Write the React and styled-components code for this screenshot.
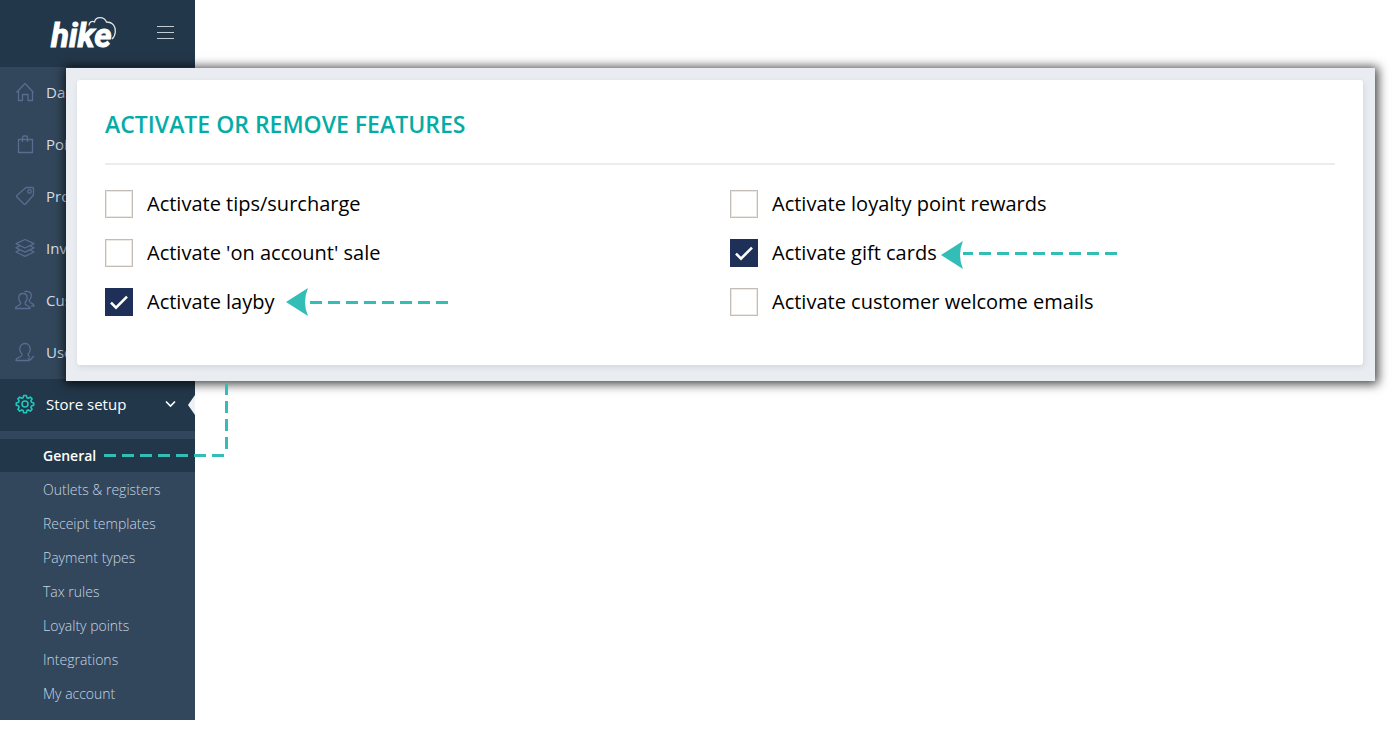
import React from "react";
import styled, { createGlobalStyle, css } from "styled-components";

const GlobalStyle = createGlobalStyle`
  *, *::before, *::after { box-sizing: border-box; }
  body {
    margin: 0;
    background: #fff;
    font-family: "Open Sans", "Noto Sans", sans-serif;
  }
`;

const Page = styled.div`
  position: relative;
  min-height: 100vh;
`;

const Sidebar = styled.aside`
  width: 195px;
  background: #32475b;
`;

const Brand = styled.header`
  display: flex;
  align-items: center;
  justify-content: space-between;
  height: 67px;
  padding: 0 21px 2px 49px;
  background: #23374a;
`;

const Logo = styled.svg`
  display: block;
  width: 70px;
  height: 49px;
  overflow: visible;
`;

const LogoText = styled.text`
  font-family: Roboto, "Liberation Sans", sans-serif;
  font-size: 33px;
  font-weight: 700;
  font-style: italic;
`;

const MenuButton = styled.button`
  display: flex;
  flex-direction: column;
  justify-content: space-between;
  width: 17px;
  height: 13px;
  margin: 0;
  padding: 0;
  border: 0;
  background: none;
  cursor: pointer;
`;

const MenuBar = styled.span`
  height: 1px;
  background: #c3cbd3;
`;

const List = styled.ul`
  margin: 0;
  padding: 0;
  list-style: none;
`;

const NavLink = styled.a`
  position: relative;
  display: flex;
  align-items: center;
  gap: 11px;
  height: 52px;
  padding: 0 19px 2px 15px;
  font-size: 15px;
  line-height: 20px;
  text-decoration: none;
  color: #d5dde6;
  ${(p) =>
    p.$active &&
    css`
      background: #23374a;
      color: #fff;
    `}
`;

const NavIcon = styled.svg`
  flex: none;
  width: 20px;
  height: 20px;
  fill: none;
  stroke: ${(p) => (p.$active ? "#1fc8bd" : "#5a6c90")};
  stroke-width: ${(p) => (p.$active ? 1.6 : 1.3)};
  stroke-linejoin: round;
`;

const NavLabel = styled.span`
  flex: 1;
  white-space: nowrap;
`;

const Chevron = styled.svg`
  width: 11px;
  height: 8px;
  fill: none;
  stroke: #fff;
  stroke-width: 1.6;
`;

const ActiveNotch = styled.span`
  position: absolute;
  right: 0;
  top: 16px;
  border: solid transparent;
  border-width: 10px 7px 10px 0;
  border-right-color: #eef1f5;
`;

const SubList = styled(List)`
  display: grid;
  gap: 1px;
  padding: 8px 0 10px;
`;

const SubItem = styled.li`
  position: relative;
  background: ${(p) => (p.$active ? "#23374a" : "transparent")};
`;

const SubLink = styled.a`
  display: block;
  padding-left: 43px;
  font-size: 14px;
  line-height: 33px;
  font-weight: ${(p) => (p.$active ? 600 : 300)};
  color: ${(p) => (p.$active ? "#fff" : "#c6d5e6")};
  text-decoration: none;
`;

const Connector = styled.svg`
  position: absolute;
  left: 104px;
  bottom: 0;
  z-index: 2;
  width: 126px;
  height: 89px;
  fill: none;
  stroke: #33bdb7;
  stroke-width: 3;
  stroke-dasharray: 12 6;
  pointer-events: none;
`;

const Panel = styled.main`
  position: absolute;
  z-index: 1;
  top: 68px;
  left: 66px;
  right: 25px;
  padding: 12px 12px 16px 11px;
  background: #e9ecf1;
  box-shadow: 1px 1px 10px 2px rgba(0, 0, 0, 0.75);
`;

const Card = styled.section`
  padding: 28px 28px 49px;
  background: #fff;
  border-radius: 3px;
  box-shadow: 1px 2px 5px rgba(120, 135, 155, 0.2);
`;

const Title = styled.h1`
  margin: 0 0 25px;
  padding-bottom: 23px;
  border-bottom: 2px solid #ececec;
  font-size: 23px;
  line-height: 32px;
  font-weight: 600;
  text-transform: uppercase;
  color: #05aca6;
`;

const Features = styled.div`
  display: grid;
  grid-template-columns: 1fr 1fr;
  gap: 21px 20px;
`;

const Feature = styled.div`
  display: flex;
  align-items: center;
  height: 28px;
`;

const Checkbox = styled.input`
  appearance: none;
  flex: none;
  width: 28px;
  height: 28px;
  margin: 0;
  border: 1px solid #c3bdb5;
  background: #fff;
  box-shadow: inset 0 0 0 1px #ece9e5;
  cursor: pointer;
  &:checked {
    border-color: #1f3058;
    box-shadow: none;
    background: #1f3058
      url("data:image/svg+xml,%3Csvg xmlns='http://www.w3.org/2000/svg' viewBox='0 0 24 24' fill='none' stroke='white' stroke-width='2.6'%3E%3Cpath d='M4 12.6l5 5L20 6.6'/%3E%3C/svg%3E")
      center / 24px 24px no-repeat;
  }
`;

const FeatureLabel = styled.label`
  padding-left: 14px;
  font-size: 20px;
  line-height: 28px;
  white-space: nowrap;
  color: #000;
`;

const Pointer = styled.svg`
  flex: none;
  width: 180px;
  height: 28px;
  margin-left: ${(p) => p.$gap}px;
  overflow: visible;
`;

const icons = {
  home: (
    <path d="M1.500 10.500 10 1.500l8.500 9M3.500 9v9.500h4v-6h5.500v6h4.500V9" />
  ),
  bag: (
    <>
      <path d="M3.500 5.500h14v13h-14z" />
      <path d="M7.500 8V3.500q0-1.500 1.500-1.500h2q1.500 0 1.500 1.500V8" />
    </>
  ),
  tag: (
    <>
      <path d="M11 1.500h6.500q1 0 1 1V9L10.500 18q-.8.800-1.600 0l-7-7q-.8-.8 0-1.500z" />
      <circle cx="14.500" cy="5.500" r="1.800" />
    </>
  ),
  layers: (
    <path d="M10 1.500l9 4.200-9 4.300-9-4.300zM4.500 8 1 9.800l9 4.300 9-4.300L15.500 8M4.500 12.200 1 14l9 4.300 9-4.300-3.500-1.800" />
  ),
  customers: (
    <>
      <path d="M8 3.500c-3 0-4.300 2-4.300 4.500 0 2 .8 3.500 2 4.500 0 2-.4 2.300-2.200 3-2 .8-3 1.300-3 3h14.500c0-1.700-1-2.200-3-3-1.800-.7-2-1-2-3 1.200-1 2.200-2.500 2.200-4.500C12.200 5.500 11 3.500 8 3.500z" />
      <path d="M9.500 2c1-.7 2-.9 3-.7 2.500.3 3.800 2 3.800 4.500 0 2-.8 3.400-2 4.400 0 1.800.3 2.200 2 2.900 1.700.6 2.700 1.200 2.700 3h-3" />
    </>
  ),
  users: (
    <>
      <path d="M14 18.500H1c0-1.800 1-2.500 3-3.200 2.400-.8 3-1.100 3-3.300-1.200-1-2.200-2.500-2.200-4.800C4.800 4 6.800 1.500 10 1.500S15.200 4 15.200 7.200c0 2.300-1 3.800-2.200 4.800 0 1.800.4 2.300 2 2.900" />
      <path d="M13 16l2 2.300 3.800-4.300" />
    </>
  ),
  gear: (
    <>
      <path d="M8.700 1.500h2.600l.6 2.200 1.400.6 2-1.200 1.800 1.800-1.200 2 .6 1.400 2.200.6v2.400l-2.200.6-.6 1.400 1.200 2-1.800 1.800-2-1.200-1.400.6-.6 2.200H8.700l-.6-2.200-1.400-.6-2 1.200-1.800-1.800 1.200-2-.6-1.400-2.200-.6V8.900l2.200-.6.600-1.400-1.200-2 1.800-1.800 2 1.200 1.400-.6z" />
      <circle cx="10" cy="10" r="3" />
    </>
  ),
};

const navItems = [
  { icon: "home", label: "Dashboard" },
  { icon: "bag", label: "Point of sale" },
  { icon: "tag", label: "Products" },
  { icon: "layers", label: "Inventory" },
  { icon: "customers", label: "Customers" },
  { icon: "users", label: "Users" },
  { icon: "gear", label: "Store setup", active: true },
];

const subItems = [
  "General",
  "Outlets & registers",
  "Receipt templates",
  "Payment types",
  "Tax rules",
  "Loyalty points",
  "Integrations",
  "My account",
];

const features = [
  { id: "tips", label: "Activate tips/surcharge" },
  { id: "loyalty", label: "Activate loyalty point rewards" },
  { id: "account", label: "Activate 'on account' sale" },
  {
    id: "gift",
    label: "Activate gift cards",
    on: true,
    pointer: { gap: 4, end: 176, drop: 2 },
  },
  {
    id: "layby",
    label: "Activate layby",
    on: true,
    pointer: { gap: 11, end: 162, drop: 0 },
  },
  { id: "emails", label: "Activate customer welcome emails" },
];

function HikeLogo() {
  return (
    <Logo viewBox="0 -4 70 49" role="img" aria-label="hike">
      <LogoText x="2" y="35" fill="#fff" stroke="#fff" strokeWidth="1">
        hike
      </LogoText>
      <path
        d="M40 13.500C40 10 43 8.500 45.500 10 46.500 4.500 55 4 57.500 10c6.500 0 9.500 5 8.800 10-.3 3-1.300 5.500-3.300 7"
        fill="none"
        stroke="#dfe5ea"
        strokeWidth="1.3"
      />
    </Logo>
  );
}

function DashedPointer({ gap, end, drop }) {
  return (
    <Pointer $gap={gap} viewBox="0 0 180 28" aria-hidden="true">
      <path d={`M0 ${14 + drop} 22 ${drop}q-6 14 0 28z`} fill="#33bdb7" />
      <path
        d={`M${end} 14.500H22`}
        stroke="#33bdb7"
        strokeWidth="3"
        strokeDasharray="12 6"
      />
    </Pointer>
  );
}

export default function App() {
  return (
    <Page>
      <GlobalStyle />
      <Sidebar>
        <Brand>
          <HikeLogo />
          <MenuButton type="button" aria-label="Toggle menu">
            <MenuBar />
            <MenuBar />
            <MenuBar />
          </MenuButton>
        </Brand>
        <nav aria-label="Main">
          <List>
            {navItems.map(({ icon, label, active }) => (
              <li key={label}>
                <NavLink href="#" $active={active}>
                  <NavIcon viewBox="0 0 20 20" $active={active} aria-hidden="true">
                    {icons[icon]}
                  </NavIcon>
                  <NavLabel>{label}</NavLabel>
                  {active && (
                    <>
                      <Chevron viewBox="0 0 11 8" aria-hidden="true">
                        <path d="M1 1.500l4.500 4.500L10 1.500" />
                      </Chevron>
                      <ActiveNotch />
                    </>
                  )}
                </NavLink>
              </li>
            ))}
          </List>
          <SubList>
            {subItems.map((label, i) => (
              <SubItem key={label} $active={i === 0}>
                <SubLink href="#" $active={i === 0}>
                  {label}
                </SubLink>
                {i === 0 && (
                  <Connector viewBox="0 0 126 89" aria-hidden="true">
                    <path d="M0 72.500h120" />
                    <path d="M122.500 66V0" />
                  </Connector>
                )}
              </SubItem>
            ))}
          </SubList>
        </nav>
      </Sidebar>
      <Panel>
        <Card>
          <Title>Activate or remove features</Title>
          <Features>
            {features.map(({ id, label, on, pointer }) => (
              <Feature key={id}>
                <Checkbox type="checkbox" id={id} defaultChecked={on} />
                <FeatureLabel htmlFor={id}>{label}</FeatureLabel>
                {pointer && <DashedPointer {...pointer} />}
              </Feature>
            ))}
          </Features>
        </Card>
      </Panel>
    </Page>
  );
}
